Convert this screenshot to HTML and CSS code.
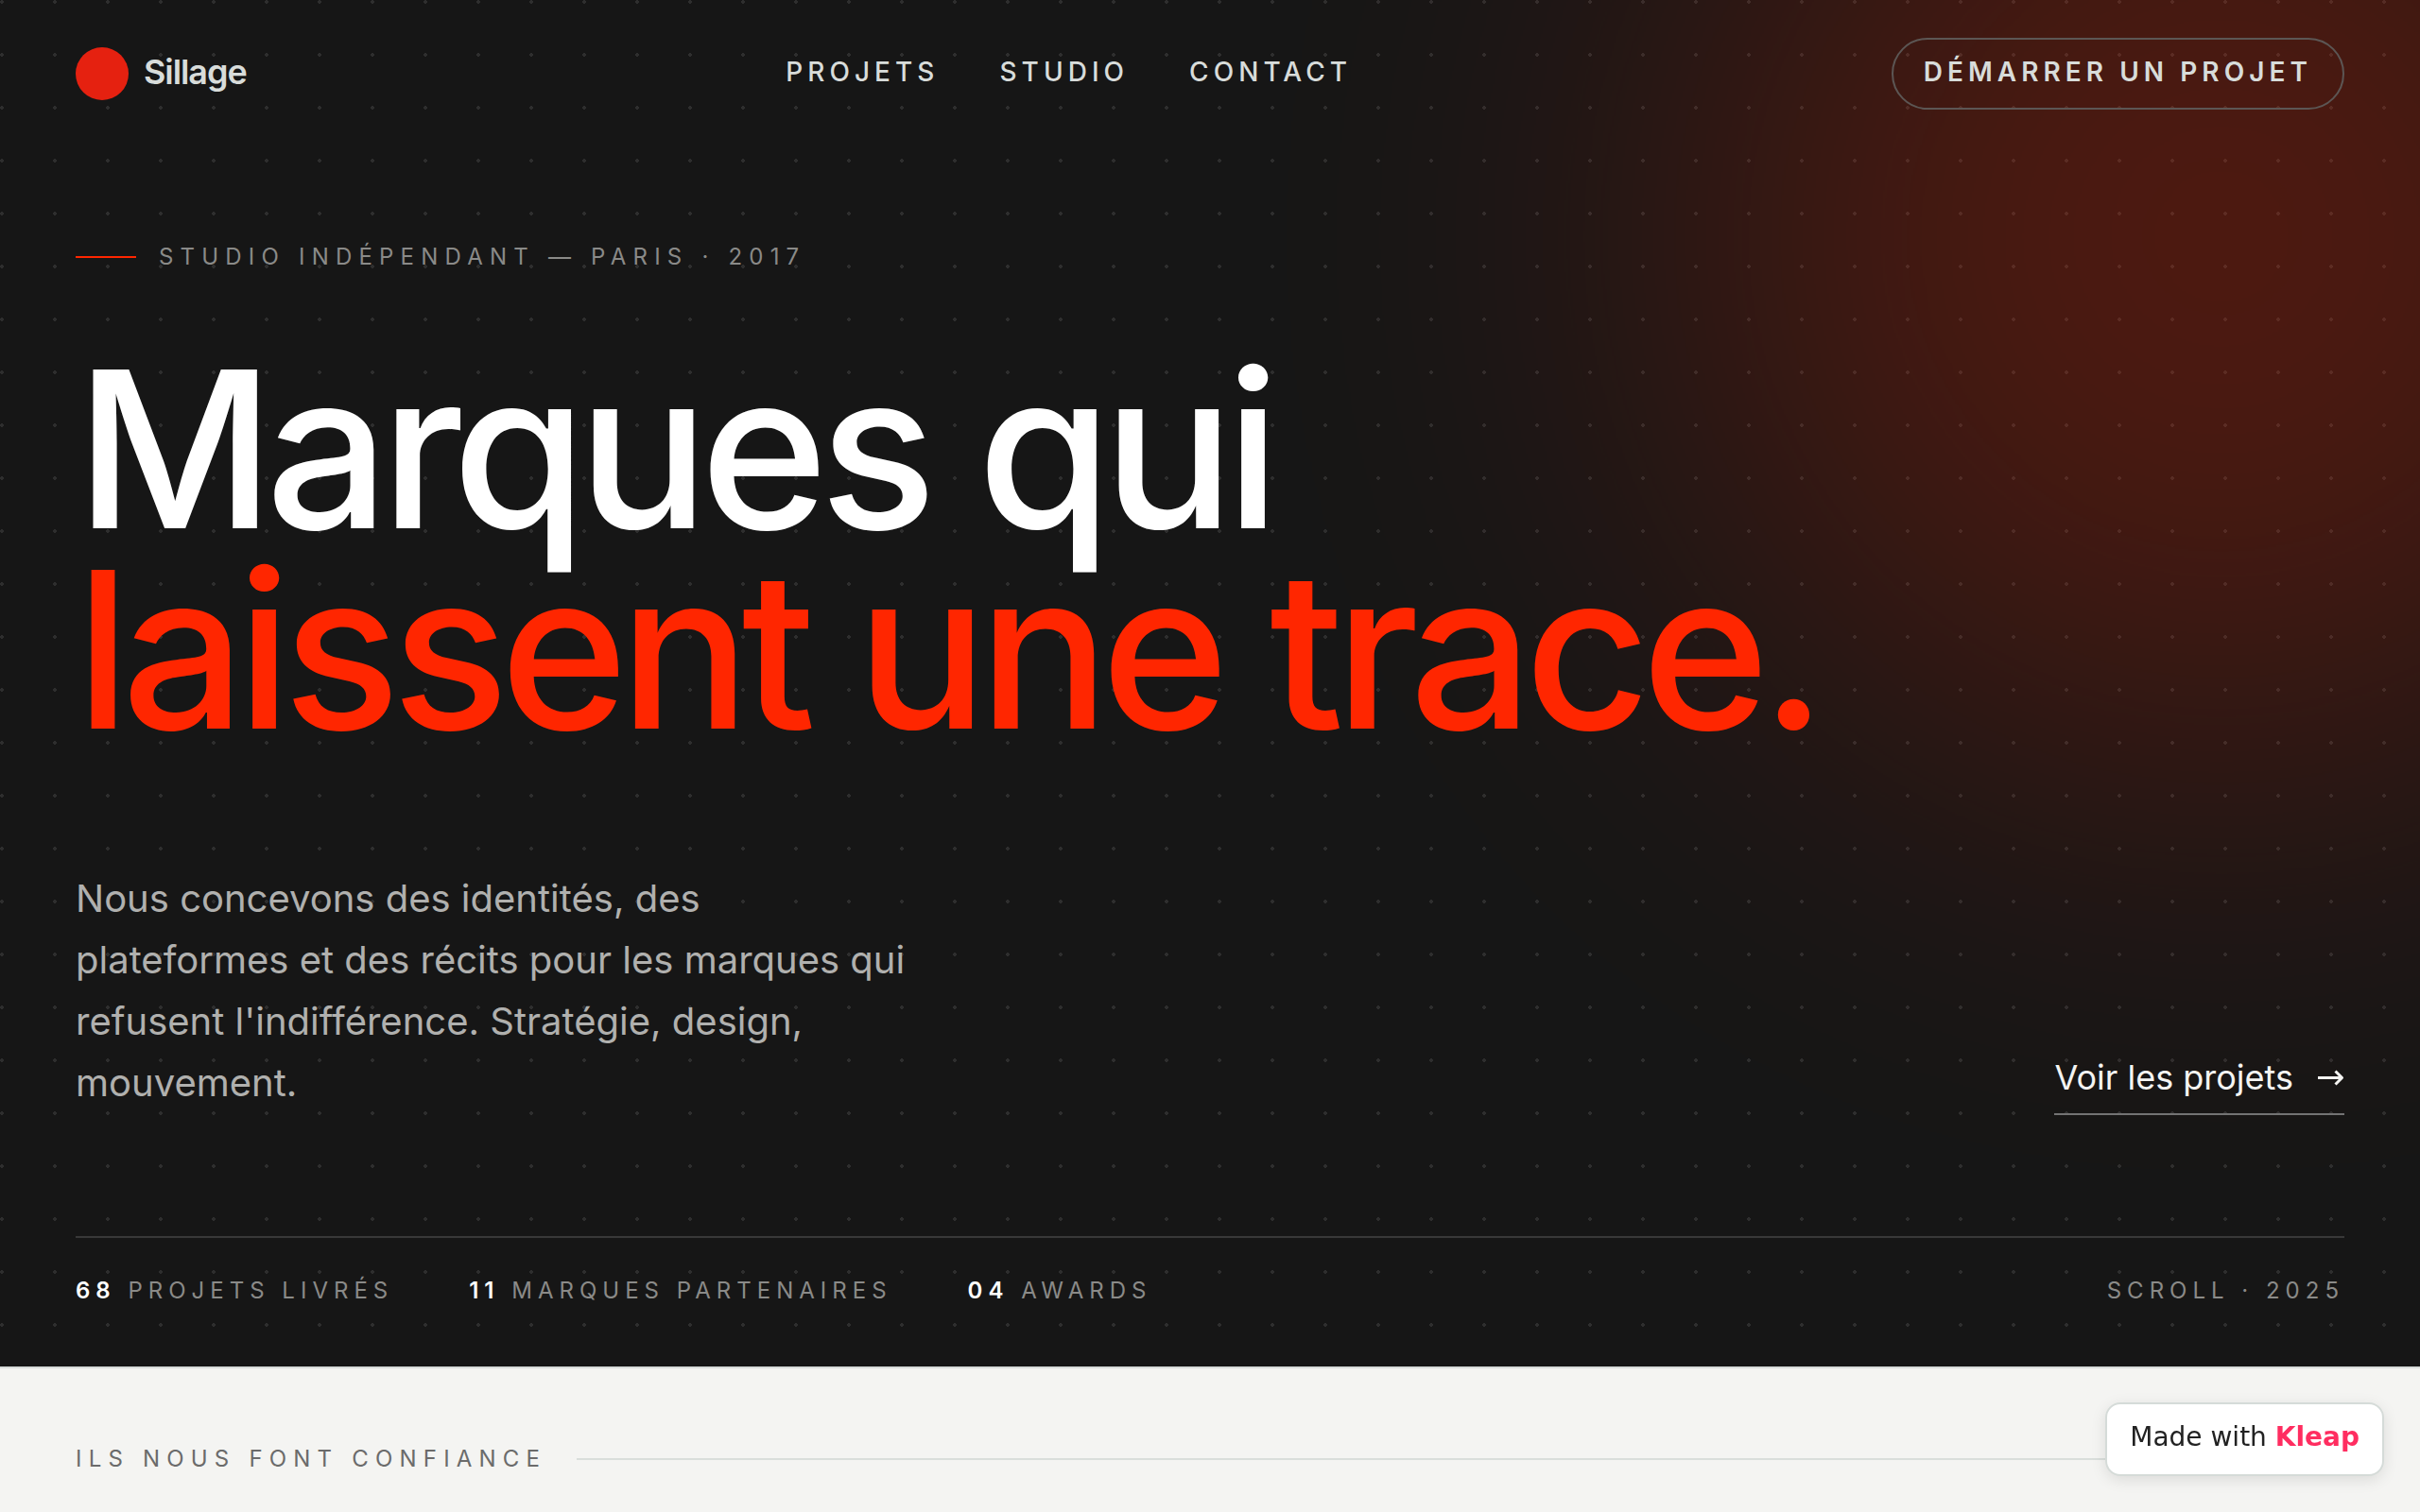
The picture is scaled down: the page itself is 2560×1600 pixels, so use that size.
FILE: index.html
```html
<!DOCTYPE html>
<html lang="fr">
<head>
<meta charset="utf-8">
<meta name="viewport" content="width=device-width, initial-scale=1">
<title>Sillage — Studio indépendant</title>
<link rel="stylesheet" href="styles.css">
</head>
<body>
<div class="hero">
  <div class="hero-glow" aria-hidden="true"></div>
  <header class="site-header">
    <a class="brand" href="#"><span class="brand-mark"></span><span class="brand-name">Sillage</span></a>
    <nav class="site-nav" aria-label="Navigation principale">
      <a href="#projets">Projets</a>
      <a href="#studio">Studio</a>
      <a href="#contact">Contact</a>
    </nav>
    <a class="header-cta" href="#contact">Démarrer un projet</a>
  </header>
  <main class="hero-main">
    <p class="eyebrow">Studio indépendant — Paris · 2017</p>
    <h1 class="hero-title">Marques qui<br><span class="accent">laissent une trace.</span></h1>
    <div class="hero-intro">
      <p class="lead">Nous concevons des identités, des plateformes et des récits pour les marques qui refusent l'indifférence. Stratégie, design, mouvement.</p>
      <a class="hero-link" href="#projets">Voir les projets
        <svg width="30" height="20" viewBox="0 0 30 20" fill="none" stroke="currentColor" stroke-width="3" stroke-linejoin="round" aria-hidden="true"><path d="M2 10.500H27M20.500 3.500L27.500 10.500L20.500 17.500"/></svg>
      </a>
    </div>
    <div class="hero-stats">
      <ul class="stats">
        <li><strong>68</strong> Projets livrés</li>
        <li><strong>11</strong> Marques partenaires</li>
        <li><strong>04</strong> Awards</li>
      </ul>
      <span>Scroll · 2025</span>
    </div>
  </main>
</div>
<section class="clients">
  <h2 class="section-label">Ils nous font confiance</h2>
</section>
<a class="made-with" href="#">Made with <strong>Kleap</strong></a>
</body>
</html>
```

FILE: styles.css
```css
:root {
  --ink: #161616;
  --paper: #f4f4f2;
  --accent: #ff2600;
  --gutter: 80px;
}

* {
  box-sizing: border-box;
}

body {
  margin: 0;
  background: var(--paper);
  color: var(--ink);
  font-family: Inter, "Liberation Sans", sans-serif;
}

a {
  color: inherit;
  text-decoration: none;
}

.hero {
  position: relative;
  overflow: hidden;
  background: var(--ink);
  color: #fff;
}

.hero::before {
  content: "";
  position: absolute;
  inset: 0;
  background-image: radial-gradient(circle at 2px 2px, rgba(255, 255, 255, 0.1) 2px, transparent 2px);
  background-size: 56px 56px;
}

.hero-glow {
  position: absolute;
  top: -310px;
  right: -350px;
  width: 1120px;
  height: 1120px;
  border-radius: 50%;
  background: var(--accent);
  filter: blur(240px);
  opacity: 0.24;
}

.site-header,
.hero-main {
  position: relative;
  padding: 0 var(--gutter);
}

.site-header {
  display: flex;
  align-items: center;
  justify-content: space-between;
  padding-top: 40px;
  padding-bottom: 40px;
  color: #d8dcda;
}

.brand {
  display: flex;
  align-items: center;
  gap: 16px;
  font-size: 36px;
  font-weight: 600;
  letter-spacing: -0.03em;
}

.brand-name,
.site-nav {
  padding-bottom: 4px;
}

.brand-mark {
  width: 56px;
  height: 56px;
  border-radius: 50%;
  background: #e52110;
}

.site-nav {
  display: flex;
  gap: 64px;
  font-size: 28px;
  font-weight: 500;
  letter-spacing: 0.18em;
  text-transform: uppercase;
}

.header-cta {
  padding: 14px 32px 18px;
  border: 2px solid #5c5654;
  border-radius: 38px;
  font-size: 28px;
  font-weight: 600;
  line-height: 40px;
  letter-spacing: 0.18em;
  text-transform: uppercase;
}

.eyebrow {
  display: flex;
  align-items: center;
  gap: 24px;
  margin: 0;
  padding-top: 100px;
  color: #8a8a88;
  font-size: 24px;
  line-height: 32px;
  letter-spacing: 0.3em;
  text-transform: uppercase;
}

.eyebrow::before {
  content: "";
  width: 64px;
  height: 2px;
  background: var(--accent);
}

.hero-title {
  margin: 82px 0 0;
  font-size: 9vw;
  font-weight: 500;
  line-height: 0.92;
  letter-spacing: -0.04em;
}

.accent {
  color: var(--accent);
}

.hero-intro {
  display: flex;
  align-items: flex-end;
  justify-content: space-between;
  margin-top: 124px;
}

.lead {
  max-width: 896px;
  margin: 0;
  padding-bottom: 2px;
  color: #b0b0ae;
  font-size: 40px;
  line-height: 65px;
}

.hero-link {
  display: flex;
  align-items: center;
  gap: 24px;
  padding-bottom: 10px;
  border-bottom: 2px solid #737373;
  color: #f4f4f2;
  font-size: 36px;
  line-height: 56px;
}

.hero-stats {
  display: flex;
  justify-content: space-between;
  margin-top: 128px;
  padding: 40px 0 64px;
  border-top: 2px solid #383838;
  color: #8a8a88;
  font-size: 24px;
  line-height: 32px;
  letter-spacing: 0.25em;
  text-transform: uppercase;
}

.stats {
  display: flex;
  gap: 80px;
  margin: 0;
  padding: 0;
  list-style: none;
}

.stats strong {
  color: #fff;
  font-weight: 600;
}

.clients {
  padding: 80px var(--gutter);
  border-top: 2px solid #d8dcda;
}

.section-label {
  display: flex;
  align-items: center;
  gap: 32px;
  margin: 0;
  color: #6b6b6b;
  font-size: 24px;
  font-weight: 400;
  line-height: 32px;
  letter-spacing: 0.3em;
  text-transform: uppercase;
}

.section-label::after {
  content: "";
  flex: 1;
  height: 2px;
  background: #d9dedb;
}

.made-with {
  position: fixed;
  right: 38px;
  bottom: 38px;
  padding: 18px 24px 22px;
  border: 2px solid #d5dbd8;
  border-radius: 16px;
  background: #fff;
  box-shadow: 0 4px 16px rgba(0, 0, 0, 0.1);
  color: #222;
  font-family: "DejaVu Sans", sans-serif;
  font-size: 28px;
  line-height: 34px;
}

.made-with strong {
  color: #ff2d60;
}
```
